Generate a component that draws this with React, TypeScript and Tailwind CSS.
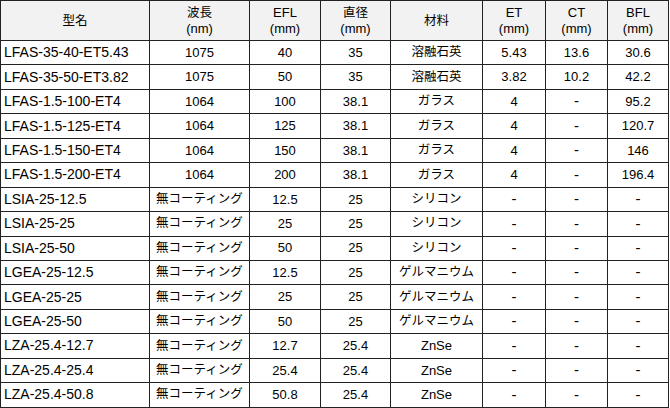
import React from 'react';

type Row = {
  model: string;
  wave: string;
  efl: string;
  dia: string;
  material: string;
  et: string;
  ct: string;
  bfl: string;
};

const NC = '無コーティング';

const rows: Row[] = [
  { model: 'LFAS-35-40-ET5.43', wave: '1075', efl: '40', dia: '35', material: '溶融石英', et: '5.43', ct: '13.6', bfl: '30.6' },
  { model: 'LFAS-35-50-ET3.82', wave: '1075', efl: '50', dia: '35', material: '溶融石英', et: '3.82', ct: '10.2', bfl: '42.2' },
  { model: 'LFAS-1.5-100-ET4', wave: '1064', efl: '100', dia: '38.1', material: 'ガラス', et: '4', ct: '-', bfl: '95.2' },
  { model: 'LFAS-1.5-125-ET4', wave: '1064', efl: '125', dia: '38.1', material: 'ガラス', et: '4', ct: '-', bfl: '120.7' },
  { model: 'LFAS-1.5-150-ET4', wave: '1064', efl: '150', dia: '38.1', material: 'ガラス', et: '4', ct: '-', bfl: '146' },
  { model: 'LFAS-1.5-200-ET4', wave: '1064', efl: '200', dia: '38.1', material: 'ガラス', et: '4', ct: '-', bfl: '196.4' },
  { model: 'LSIA-25-12.5', wave: NC, efl: '12.5', dia: '25', material: 'シリコン', et: '-', ct: '-', bfl: '-' },
  { model: 'LSIA-25-25', wave: NC, efl: '25', dia: '25', material: 'シリコン', et: '-', ct: '-', bfl: '-' },
  { model: 'LSIA-25-50', wave: NC, efl: '50', dia: '25', material: 'シリコン', et: '-', ct: '-', bfl: '-' },
  { model: 'LGEA-25-12.5', wave: NC, efl: '12.5', dia: '25', material: 'ゲルマニウム', et: '-', ct: '-', bfl: '-' },
  { model: 'LGEA-25-25', wave: NC, efl: '25', dia: '25', material: 'ゲルマニウム', et: '-', ct: '-', bfl: '-' },
  { model: 'LGEA-25-50', wave: NC, efl: '50', dia: '25', material: 'ゲルマニウム', et: '-', ct: '-', bfl: '-' },
  { model: 'LZA-25.4-12.7', wave: NC, efl: '12.7', dia: '25.4', material: 'ZnSe', et: '-', ct: '-', bfl: '-' },
  { model: 'LZA-25.4-25.4', wave: NC, efl: '25.4', dia: '25.4', material: 'ZnSe', et: '-', ct: '-', bfl: '-' },
  { model: 'LZA-25.4-50.8', wave: NC, efl: '50.8', dia: '25.4', material: 'ZnSe', et: '-', ct: '-', bfl: '-' },
];

const isJa = (s: string) => /[^\x00-\x7f]/.test(s);

// japanese text renders a bit smaller than the latin figures
const Cell = ({ v }: { v: string }) => (
  <td
    className={`border border-[#222] p-0 text-center align-middle ${
      isJa(v) ? 'text-[12.5px]' : v === '-' ? 'text-[15px]' : 'text-[13px]'
    }`}
  >
    {v}
  </td>
);

const Head = ({ ja, unit }: { ja: string; unit?: string }) => (
  <th className="border border-[#222] bg-[#f2f2f2] p-0 text-center align-middle font-normal">
    <div className="text-[12.5px] leading-[16px]">{ja}</div>
    {unit && <div className="text-[13px] leading-[16px]">{unit}</div>}
  </th>
);

const LatinHead = ({ name }: { name: string }) => (
  <th className="border border-[#222] bg-[#f2f2f2] p-0 text-center align-middle font-normal text-[13px] leading-[16px]">
    {name}
    <br />
    (mm)
  </th>
);

export default function App() {
  return (
    <div className="w-[670px] h-[408px] bg-white text-black" style={{ fontFamily: '"Liberation Sans", "Noto Sans CJK JP", sans-serif' }}>
      <table className="border-collapse table-fixed w-[668px]">
        <colgroup>
          <col className="w-[149px]" />
          <col className="w-[100px]" />
          <col className="w-[71px]" />
          <col className="w-[70px]" />
          <col className="w-[92px]" />
          <col className="w-[63px]" />
          <col className="w-[62px]" />
          <col className="w-[61px]" />
        </colgroup>
        <thead>
          <tr className="h-[40px]">
            <Head ja="型名" />
            <Head ja="波長" unit="(nm)" />
            <LatinHead name="EFL" />
            <Head ja="直径" unit="(mm)" />
            <Head ja="材料" />
            <LatinHead name="ET" />
            <LatinHead name="CT" />
            <LatinHead name="BFL" />
          </tr>
        </thead>
        <tbody>
          {rows.map((r) => (
            <tr key={r.model} className="h-[24.45px]">
              <td className="border border-[#222] py-0 pl-[3px] pr-0 text-left align-middle text-[14px] whitespace-nowrap">{r.model}</td>
              <Cell v={r.wave} />
              <Cell v={r.efl} />
              <Cell v={r.dia} />
              <Cell v={r.material} />
              <Cell v={r.et} />
              <Cell v={r.ct} />
              <Cell v={r.bfl} />
            </tr>
          ))}
        </tbody>
      </table>
    </div>
  );
}
